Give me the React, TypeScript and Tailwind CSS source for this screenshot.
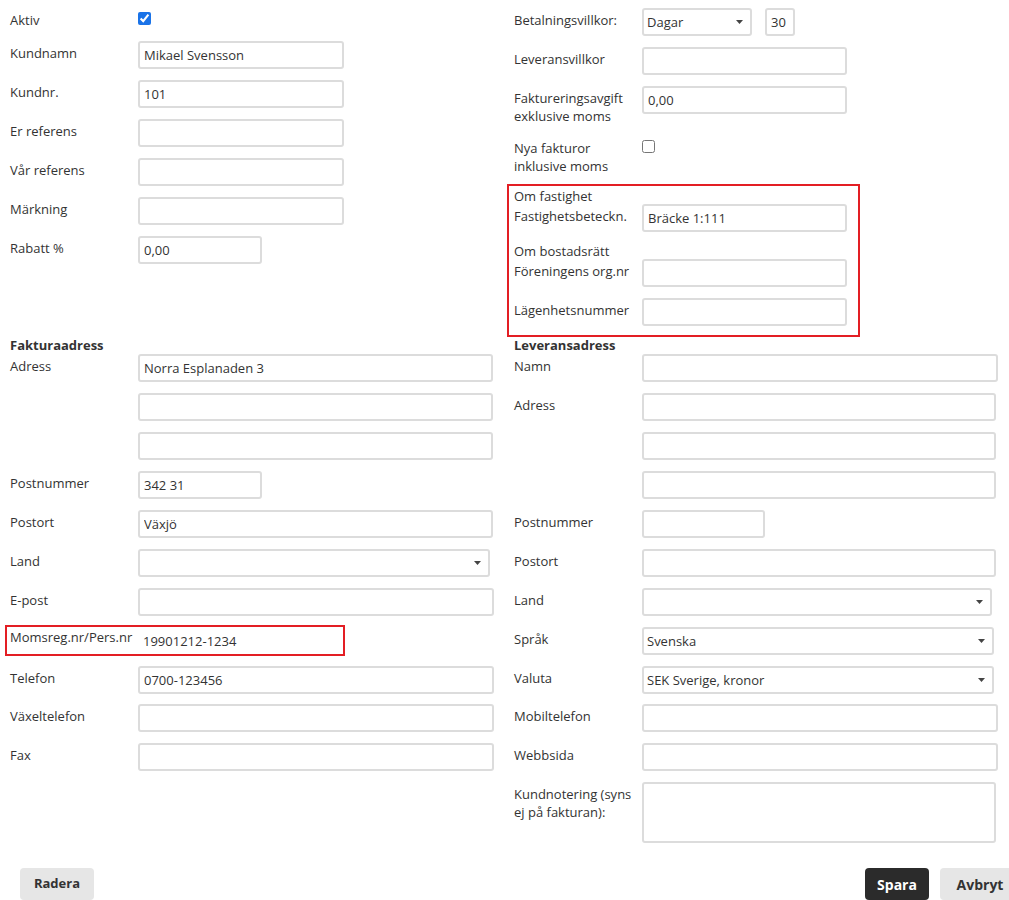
import React from "react";

const inputBase =
  "h-[28px] border-2 border-[#dcdcdc] rounded-[3px] bg-white px-[4px] text-[13px] leading-[24px] text-[#333] outline-none";

function TextBox({ value = "", w }: { value?: string; w: string }) {
  return <input readOnly value={value} className={`${inputBase} ${w}`} />;
}

function SelectBox({ value = "", w }: { value?: string; w: string }) {
  return (
    <div className={`${inputBase} ${w} flex items-center justify-between pl-[3px] pr-[7px]`}>
      <span>{value}</span>
      <svg width="7" height="4" viewBox="0 0 7 4" className="shrink-0">
        <path d="M0 0h7L3.5 4z" fill="#444" />
      </svg>
    </div>
  );
}

function Check({ checked = false }: { checked?: boolean }) {
  return (
    <input
      type="checkbox"
      readOnly
      checked={checked}
      className="mt-[4px] h-[13px] w-[13px] accent-[#1a73e8]"
    />
  );
}

function Row({
  label,
  children,
  mb = "mb-[11px]",
}: {
  label?: React.ReactNode;
  children: React.ReactNode;
  mb?: string;
}) {
  return (
    <div className={`flex items-start ${mb}`}>
      <div className="w-[128px] shrink-0 pt-[3px] leading-[18px]">{label}</div>
      {children}
    </div>
  );
}

export default function App() {
  return (
    <div
      className="w-[1009px] overflow-hidden bg-white text-[13px] text-[#333]"
      style={{ fontFamily: '"Open Sans", "Noto Sans", sans-serif' }}
    >
      <div className="pl-[10px] pt-[8px]">
        <div className="grid grid-cols-[504px_1fr]">
          {/* Top left */}
          <div>
            <Row label="Aktiv">
              <div className="h-[22px]">
                <Check checked />
              </div>
            </Row>
            <Row label="Kundnamn">
              <TextBox value="Mikael Svensson" w="w-[206px]" />
            </Row>
            <Row label="Kundnr.">
              <TextBox value="101" w="w-[206px]" />
            </Row>
            <Row label="Er referens">
              <TextBox w="w-[206px]" />
            </Row>
            <Row label="Vår referens">
              <TextBox w="w-[206px]" />
            </Row>
            <Row label="Märkning">
              <TextBox w="w-[206px]" />
            </Row>
            <Row label="Rabatt %">
              <TextBox value="0,00" w="w-[124px]" />
            </Row>
          </div>

          {/* Top right */}
          <div>
            <Row label="Betalningsvillkor:">
              <div className="flex gap-[13px]">
                <SelectBox value="Dagar" w="w-[110px]" />
                <TextBox value="30" w="w-[30px]" />
              </div>
            </Row>
            <Row label="Leveransvillkor">
              <TextBox w="w-[205px]" />
            </Row>
            <Row label={<>Faktureringsavgift<br />exklusive moms</>}>
              <TextBox value="0,00" w="w-[205px]" />
            </Row>
            <Row label={<>Nya fakturor<br />inklusive moms</>} mb="mb-[9px]">
              <Check />
            </Row>
            <div className="-ml-[7px] w-[353px] border-2 border-[#e31e24] pl-[5px] pb-[9px]">
              <div className="h-[18px] pt-[1px] leading-[18px]">Om fastighet</div>
              <Row label="Fastighetsbeteckn.">
                <TextBox value="Bräcke 1:111" w="w-[205px]" />
              </Row>
              <div className="h-[16px] leading-[16px]">Om bostadsrätt</div>
              <Row label="Föreningens org.nr">
                <TextBox w="w-[205px]" />
              </Row>
              <Row label="Lägenhetsnummer" mb="mb-0">
                <TextBox w="w-[205px]" />
              </Row>
            </div>
          </div>

          {/* Fakturaadress */}
          <div>
            <div className="h-[17px] font-bold leading-[17px]">Fakturaadress</div>
            <Row label="Adress">
              <TextBox value="Norra Esplanaden 3" w="w-[355px]" />
            </Row>
            <Row>
              <TextBox w="w-[355px]" />
            </Row>
            <Row>
              <TextBox w="w-[355px]" />
            </Row>
            <Row label="Postnummer">
              <TextBox value="342 31" w="w-[124px]" />
            </Row>
            <Row label="Postort">
              <TextBox value="Växjö" w="w-[355px]" />
            </Row>
            <Row label="Land">
              <SelectBox w="w-[352px]" />
            </Row>
            <Row label="E-post">
              <TextBox w="w-[356px]" />
            </Row>
            <div className="-ml-[5px] -mt-[2px] mb-[10px] h-[31px] w-[340px] border-2 border-[#e31e24] pl-[3px]">
              <div className="flex items-start">
                <div className="w-[128px] shrink-0 pt-[1px] leading-[18px]">Momsreg.nr/Pers.nr</div>
                <input
                  readOnly
                  value="19901212-1234"
                  className="h-[27px] w-[205px] border-0 bg-white px-[5px] pt-[1px] text-[13px] text-[#333] outline-none"
                />
              </div>
            </div>
            <Row label="Telefon" mb="mb-[10px]">
              <TextBox value="0700-123456" w="w-[356px]" />
            </Row>
            <Row label="Växeltelefon">
              <TextBox w="w-[356px]" />
            </Row>
            <Row label="Fax">
              <TextBox w="w-[356px]" />
            </Row>
          </div>

          {/* Leveransadress */}
          <div>
            <div className="h-[17px] font-bold leading-[17px]">Leveransadress</div>
            <Row label="Namn">
              <TextBox w="w-[356px]" />
            </Row>
            <Row label="Adress">
              <TextBox w="w-[354px]" />
            </Row>
            <Row>
              <TextBox w="w-[354px]" />
            </Row>
            <Row>
              <TextBox w="w-[354px]" />
            </Row>
            <Row label="Postnummer">
              <TextBox w="w-[123px]" />
            </Row>
            <Row label="Postort">
              <TextBox w="w-[354px]" />
            </Row>
            <Row label="Land">
              <SelectBox w="w-[350px]" />
            </Row>
            <Row label="Språk">
              <SelectBox value="Svenska" w="w-[352px]" />
            </Row>
            <Row label="Valuta" mb="mb-[10px]">
              <SelectBox value="SEK Sverige, kronor" w="w-[352px]" />
            </Row>
            <Row label="Mobiltelefon">
              <TextBox w="w-[356px]" />
            </Row>
            <Row label="Webbsida">
              <TextBox w="w-[356px]" />
            </Row>
            <Row label={<>Kundnotering (syns<br />ej på fakturan):</>}>
              <textarea
                readOnly
                className="h-[61px] w-[354px] resize-none rounded-[3px] border-2 border-[#dcdcdc] bg-white outline-none"
              />
            </Row>
          </div>
        </div>
      </div>

      <div className="mt-[14px] flex items-start justify-between pl-[20px]">
        <button className="h-[32px] w-[74px] rounded-[4px] bg-[#e6e6e6] font-bold text-[#333]">
          Radera
        </button>
        <div className="-mr-[11px] flex gap-[11px]">
          <button className="h-[32px] w-[64px] rounded-[4px] bg-[#2b2b2b] text-[14px] font-bold text-white">
            Spara
          </button>
          <button className="h-[32px] w-[80px] rounded-[4px] bg-[#e6e6e6] text-[14px] font-bold text-[#333]">
            Avbryt
          </button>
        </div>
      </div>
    </div>
  );
}
